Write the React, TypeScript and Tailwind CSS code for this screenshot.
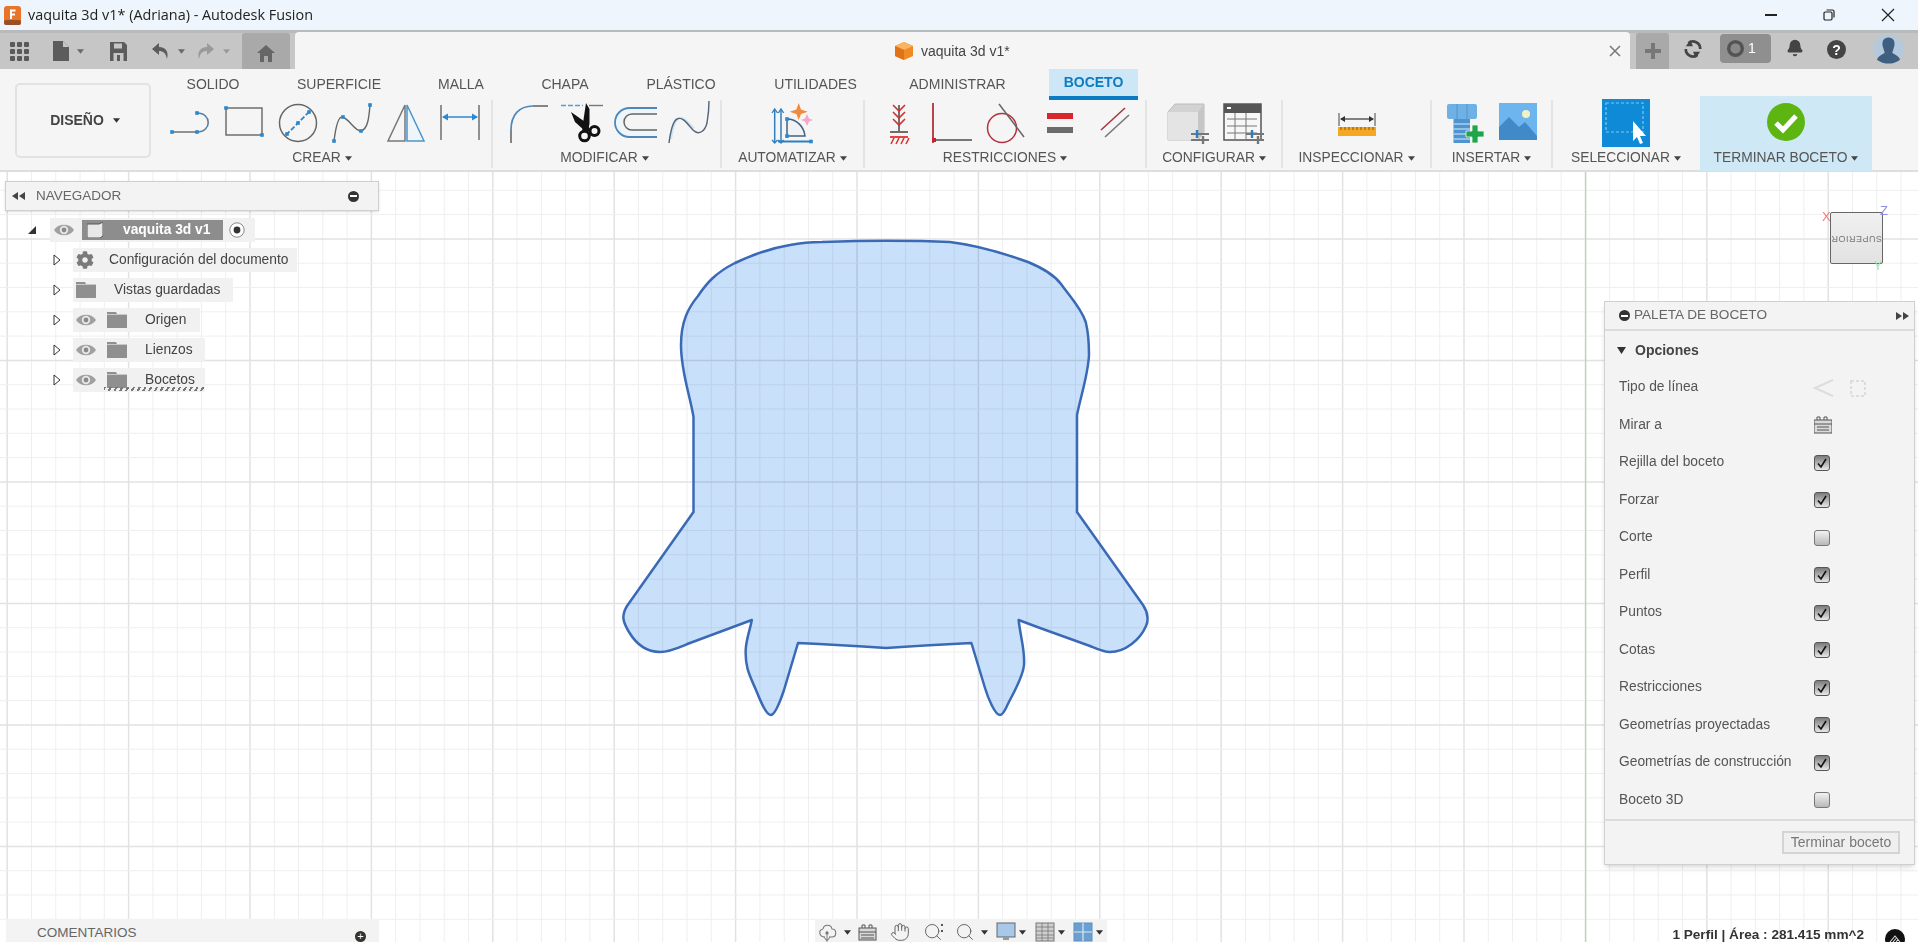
import { Hand, Search, Bell } from 'lucide-react';
import { FaCog } from 'react-icons/fa';
import type { ReactNode } from 'react';

const blob =
  'M693.5 512 L693.5 417 C690 395 681 372 681 345 C681 322 688 308 698 296 C706 284 715 273 735 263 C752 255 772 248 790 245 C805 242 815 242 822 242 C850 241 870 240.7 886 240.7 C905 240.7 930 241 950 242 C975 245 1000 252 1028 262 C1045 269 1055 276 1061 284 C1071 298 1081 308 1085.7 322 C1089 335 1089 345 1089 355 C1088 375 1081 395 1077 415 L1077 512 L1143 605 C1149 614 1148 622 1146 626 C1140 640 1125 652 1110 652 C1103 652 1095 648 1090 646 L1040 628 L1018.6 620 C1021 640 1025 650 1024 665 C1023 678 1012 695 1006 708 C1004 712 1002 715 1000 715 C995 715 988 698 985 688 L971.4 643 Q930 645 886 648 Q840 645 798 643 L784 690 C780 702 775 715 770.7 715 C766 715 760 700 756 690 C750 676 745 668 745.7 650 C746 640 750 630 751.8 620 L690 643 C680 647 670 652 660 652 C645 652 635 642 629 632 C623 622 621 616 627 606 Z';

const verticals = Array.from({ length: 79 }, (_, i) => 7.2 + i * 24.28);
const horizontals = Array.from({ length: 33 }, (_, i) => 166 + i * 24.3);

function Caret({ className = '' }: { className?: string }) {
  return (
    <svg viewBox="0 0 8 5" className={`inline-block w-[7px] h-[5px] shrink-0 ${className}`}>
      <path d="M0 0h8L4 5z" fill="currentColor" />
    </svg>
  );
}

function Box({ children, w = 40, h = 40 }: { children: ReactNode; w?: number; h?: number }) {
  return (
    <svg viewBox={`0 0 ${w} ${h}`} width={w} height={h} className="shrink-0 overflow-visible">
      {children}
    </svg>
  );
}

function Dot({ x, y }: { x: number; y: number }) {
  return <rect x={x - 1.8} y={y - 1.8} width={3.6} height={3.6} fill="#2b87cf" />;
}

function LineIcon() {
  return (
    <Box>
      <path d="M2 29H27" stroke="#666" strokeWidth="1.4" fill="none" />
      <path d="M27 29C42 29 42 10 27 10" stroke="#5b7f9f" strokeWidth="1.6" fill="none" />
      <Dot x={2} y={29} />
      <Dot x={27} y={29} />
      <Dot x={27} y={10} />
    </Box>
  );
}
function RectIcon() {
  return (
    <Box>
      <rect x="2" y="5" width="36" height="27" stroke="#666" strokeWidth="1.4" fill="none" />
      <Dot x={2} y={5} />
      <Dot x={38} y={32} />
    </Box>
  );
}
function CircleIcon() {
  return (
    <Box>
      <circle cx="20" cy="20" r="18.5" stroke="#666" strokeWidth="1.5" fill="none" />
      <path d="M8 32L32 8" stroke="#2b87cf" strokeWidth="1.8" strokeDasharray="5 2" />
      <Dot x={20} y={20} />
      <Dot x={9} y={31} />
      <Dot x={31} y={9} />
    </Box>
  );
}
function SplineIcon() {
  return (
    <Box>
      <path d="M2 38C4 22 7 14 10 14C17 15 22 28 29 28C36 26 37 14 38 2" stroke="#666" strokeWidth="1.4" fill="none" />
      <Dot x={2} y={38} />
      <Dot x={11} y={14} />
      <Dot x={29} y={28} />
      <Dot x={38} y={2} />
    </Box>
  );
}
function MirrorIcon() {
  return (
    <Box>
      <path d="M19 2L2 38H19Z" stroke="#777" strokeWidth="1.5" fill="none" />
      <path d="M21 2L38 38H21Z" stroke="#4e94c8" strokeWidth="1.5" fill="#eef6fb" />
    </Box>
  );
}
function DimIcon() {
  return (
    <Box>
      <path d="M1 2V37M39 2V37" stroke="#666" strokeWidth="1.4" />
      <path d="M3 14H37" stroke="#2b87cf" strokeWidth="1.6" />
      <path d="M2 14l6-3.5v7zM38 14l-6-3.5v7z" fill="#2b87cf" />
    </Box>
  );
}
function FilletIcon() {
  return (
    <Box>
      <path d="M2 40V27" stroke="#555" strokeWidth="1.4" fill="none" />
      <path d="M2 27C2 12 10 3 24 3" stroke="#4f87b8" strokeWidth="1.7" fill="none" />
      <path d="M24 3H39" stroke="#555" strokeWidth="1.4" />
    </Box>
  );
}
function ScissorsIcon() {
  return (
    <Box w={42}>
      <path d="M0 2.5H22" stroke="#5b9ad0" strokeWidth="1.4" strokeDasharray="5 2" />
      <path d="M28 2.5H42" stroke="#777" strokeWidth="1.4" />
      <path d="M25 0L28.5 6V21L26 30H21L22 20Z" fill="#111" />
      <path d="M10 9L27 21L29 28L24 28L14 19Z" fill="#111" />
      <circle cx="23.5" cy="33" r="4.8" stroke="#111" strokeWidth="3" fill="#f5f5f5" />
      <circle cx="33.5" cy="28" r="4.5" stroke="#111" strokeWidth="3" fill="#f5f5f5" />
    </Box>
  );
}
function OffsetIcon() {
  return (
    <Box w={42}>
      <path d="M42 5H14.5A14.5 14.5 0 0 0 14.5 34H42" stroke="#4f87b8" strokeWidth="1.8" fill="#eef6fb" />
      <path d="M42 11H17A8 8 0 0 0 17 27H42" stroke="#666" strokeWidth="1.5" fill="#f5f5f5" />
    </Box>
  );
}
function Spline2Icon() {
  return (
    <Box>
      <path d="M2 36C4 23 6 17 10 15C15 13 20 21 25 25" stroke="#cfe5f5" strokeWidth="2" fill="none" />
      <path d="M0 40C2 25 4 18 8 16C14 13 19 22 24 27C30 33 36 28 38 20C39 14 40 6 40 -2" stroke="#51657a" strokeWidth="1.4" fill="none" />
    </Box>
  );
}
function AutoIcon() {
  return (
    <Box>
      <path d="M1.7 7V40M8 7V40" stroke="#2f7fbe" strokeWidth="1.5" />
      <path d="M-1 10L1.7 6L4.5 10M5.3 10L8 6L10.7 10M-1 37L1.7 40L4.5 37M5.3 37L8 40L10.7 37" stroke="#2f7fbe" strokeWidth="1.3" fill="none" />
      <path d="M14 35V16C24 16 31 24 32 33H14" stroke="#44617d" strokeWidth="1.5" fill="#f0f3f6" />
      <path d="M5 38.5H38" stroke="#2f7fbe" strokeWidth="1.8" />
      <Dot x={14} y={16} />
      <Dot x={14} y={33} />
      <Dot x={38} y={38.5} />
      <path d="M34 11L36 15.5L40 17L36 18.5L34 23L32 18.5L28 17L32 15.5Z" fill="#f6a6c8" />
      <path d="M25.7 0L28 6.5L34.7 8.7L28 11L25.7 17L23.4 11L16.7 8.7L23.4 6.5Z" fill="#f28a3c" />
    </Box>
  );
}
function HorizIcon() {
  return (
    <Box w={20} h={44}>
      <path d="M10 2V28" stroke="#444" strokeWidth="1.5" />
      <path d="M4 2L10 8L16 2M4 9L10 15L16 9M4 16L10 22L16 16" stroke="#c33" strokeWidth="1.6" fill="none" />
      <path d="M1 29H19" stroke="#333" strokeWidth="1.4" />
      <path d="M1 34H19" stroke="#d33" strokeWidth="1.8" />
      <path d="M5 35L2 41M10 35L7 41M15 35L12 41M20 35L17 41" stroke="#d33" strokeWidth="1.6" />
    </Box>
  );
}
function PerpIcon() {
  return (
    <Box>
      <path d="M1 0V40" stroke="#b3323e" strokeWidth="1.8" />
      <path d="M1 37H40" stroke="#777" strokeWidth="1.8" />
      <rect x="0" y="35" width="4" height="4" fill="#c8222f" />
    </Box>
  );
}
function TangentIcon() {
  return (
    <Box>
      <circle cx="17" cy="25" r="14.5" stroke="#b3323e" strokeWidth="1.5" fill="none" />
      <path d="M14 1L39 34" stroke="#666" strokeWidth="1.5" />
    </Box>
  );
}
function EqualIcon() {
  return (
    <div className="flex flex-col w-[26px] h-10 gap-[8px] pt-[10px] shrink-0">
      <div className="h-[6px] bg-[#d9252b]" />
      <div className="h-[6px] bg-[#6b6b6b]" />
    </div>
  );
}
function ParallelIcon() {
  return (
    <Box w={30} h={40}>
      <path d="M2 27L26 5" stroke="#a53a42" strokeWidth="1.6" />
      <path d="M6 34L30 12" stroke="#777" strokeWidth="1.6" />
    </Box>
  );
}
function Sliders() {
  return (
    <g>
      <path d="M23 31H41" stroke="#777" strokeWidth="2" />
      <path d="M23 37H41" stroke="#777" strokeWidth="2" />
      <path d="M29 27V35" stroke="#2b7fc0" strokeWidth="2.4" />
      <path d="M35 33V41" stroke="#777" strokeWidth="2.4" />
    </g>
  );
}
function CubeIcon() {
  return (
    <Box>
      <path d="M0 9L7 1H36V29L30 37H0Z" fill="#d2d2d2" stroke="#bcbcbc" />
      <path d="M0 9H30V37H0Z" fill="#e4e4e4" />
      <path d="M30 9L36 1V29L30 37Z" fill="#c6c6c6" />
      <Sliders />
    </Box>
  );
}
function TableIcon() {
  return (
    <Box>
      <rect x="1" y="1" width="37" height="36" fill="#f7f7f7" stroke="#555" strokeWidth="1.5" />
      <rect x="1" y="1" width="37" height="9" fill="#555" />
      <rect x="4" y="4" width="4" height="2" fill="#fff" />
      <path d="M4 16H34M4 23H34M4 30H34M12 10V36M23 10V36" stroke="#777" strokeWidth="1" />
      <Sliders />
    </Box>
  );
}
function RulerIcon() {
  return (
    <Box w={38} h={24}>
      <path d="M1 1V14M37 1V14" stroke="#444" strokeWidth="1" />
      <path d="M3 7H35" stroke="#333" strokeWidth="1.2" />
      <path d="M2 7l5-3v6zM36 7l-5-3v6z" fill="#333" />
      <rect x="0" y="15" width="38" height="9" fill="#f5a623" />
      <path d="M3 15v3M7 15v3M11 15v3M15 15v3M19 15v3M23 15v3M27 15v3M31 15v3M35 15v3" stroke="#7a5a10" strokeWidth="1" />
    </Box>
  );
}
function BoltIcon() {
  return (
    <Box>
      <rect x="0" y="1" width="30" height="15" rx="2" fill="#6fb1e4" />
      <path d="M10 1V16M20 1V16" stroke="#4f94cf" strokeWidth="1" />
      <path d="M6.5 16H23V40H6.5Z" fill="#4f94cf" />
      <path d="M6.5 21H23M6.5 26H23M6.5 31H23M6.5 36H23" stroke="#a9cfee" strokeWidth="1.5" />
      <path d="M25 22H31V28H37V34H31V40H25V34H19V28H25Z" fill="#1fa54a" stroke="#f5f5f5" strokeWidth="0.8" />
    </Box>
  );
}
function ImageIcon() {
  return (
    <Box w={38} h={38}>
      <rect x="0" y="0" width="38" height="37" fill="#6db5ee" />
      <circle cx="27" cy="11" r="4" fill="#f3f0c4" />
      <path d="M0 37V24L10 14L20 24L26 19L38 33V37Z" fill="#3f8ac7" />
    </Box>
  );
}
function SelectIcon() {
  return (
    <Box w={48} h={48}>
      <rect width="48" height="48" fill="#0f8ad6" />
      <rect x="4" y="4" width="37" height="29" fill="none" stroke="#7cc8f2" strokeWidth="1.2" strokeDasharray="3 2" />
      <path d="M31 22L31 42L35 38L38 45L41 44L38 37L44 37Z" fill="#fff" />
    </Box>
  );
}
function CheckIcon() {
  return (
    <Box w={38} h={38}>
      <circle cx="19" cy="19" r="19" fill="#5cb510" />
      <path d="M9 20L16 27L29 13" stroke="#fff" strokeWidth="5" fill="none" />
    </Box>
  );
}

function Group({ w, label, children }: { w: number; label: string; children: ReactNode }) {
  return (
    <div style={{ width: w }} className="relative flex flex-col items-center shrink-0">
      <div className="h-[48px] flex items-start justify-center pt-[4px]">{children}</div>
      <div className="h-[16px] mt-[3px] flex items-center gap-[4px] text-[13.8px] leading-none text-[#555] whitespace-nowrap">
        {label}
        <Caret className="text-[#444]" />
      </div>
    </div>
  );
}

function Sep() {
  return <div className="w-[2px] h-[68px] mt-[1px] -mx-[1px] bg-[#e4e4e4] shrink-0" />;
}

const tabs: [string, string][] = [
  ['SOLIDO', 'w-[96px]'],
  ['SUPERFICIE', 'w-[156px]'],
  ['MALLA', 'w-[88px]'],
  ['CHAPA', 'w-[120px]'],
  ['PLÁSTICO', 'w-[112px]'],
  ['UTILIDADES', 'w-[157px]'],
  ['ADMINISTRAR', 'w-[127px]'],
];

function Ribbon() {
  return (
    <div className="h-[103px] bg-[#f5f5f5] border-b-2 border-[#dedede] flex shrink-0">
      <div className="w-[152px] pl-[15px] pt-[14px] shrink-0">
        <div className="w-[136px] h-[75px] rounded-[5px] border-2 border-[#e2e2e2] flex items-center justify-center gap-[9px] pl-[4px] text-[14px] font-bold text-[#444]">
          DISEÑO
          <Caret className="text-[#333]" />
        </div>
      </div>
      <div className="flex flex-col flex-1">
        <div className="h-[30px] flex items-center pl-[13px] text-[14px] text-[#555]">
          {tabs.map(([t, w]) => (
            <div key={t} className={`${w} text-center shrink-0`}>
              {t}
            </div>
          ))}
          <div className="ml-[28px] w-[89px] h-[31px] bg-[#cde7f6] border-b-4 border-[#0b7cc4] font-bold text-[#0b7cc4] flex items-center justify-center shrink-0">
            BOCETO
          </div>
        </div>
        <div className="flex">
          <Group w={340} label="CREAR">
            <div className="flex gap-[14px] pl-[6px]">
              <LineIcon />
              <RectIcon />
              <CircleIcon />
              <SplineIcon />
              <MirrorIcon />
              <DimIcon />
            </div>
          </Group>
          <Sep />
          <div className="-ml-[2px]">
            <Group w={229} label="MODIFICAR">
              <div className="flex gap-[12px] pl-[8px]">
                <FilletIcon />
                <ScissorsIcon />
                <OffsetIcon />
                <Spline2Icon />
              </div>
            </Group>
          </div>
          <div className="ml-[2px]">
            <Sep />
          </div>
          <Group w={143} label="AUTOMATIZAR">
            <AutoIcon />
          </Group>
          <Sep />
          <Group w={282} label="RESTRICCIONES">
            <div className="flex items-start pl-[8px]">
              <HorizIcon />
              <div className="ml-[23px]">
                <PerpIcon />
              </div>
              <div className="ml-[13px]">
                <TangentIcon />
              </div>
              <div className="ml-[22px]">
                <EqualIcon />
              </div>
              <div className="ml-[26px]">
                <ParallelIcon />
              </div>
            </div>
          </Group>
          <Sep />
          <Group w={136} label="CONFIGURAR">
            <div className="flex gap-[15px] pl-[3px]">
              <CubeIcon />
              <TableIcon />
            </div>
          </Group>
          <Sep />
          <Group w={149} label="INSPECCIONAR">
            <div className="pt-[9px]">
              <RulerIcon />
            </div>
          </Group>
          <Sep />
          <Group w={121} label="INSERTAR">
            <div className="flex gap-[12px]">
              <BoltIcon />
              <ImageIcon />
            </div>
          </Group>
          <Sep />
          <Group w={148} label="SELECCIONAR">
            <div className="-mt-[4px]">
              <SelectIcon />
            </div>
          </Group>
          <div className="w-[172px] h-[75px] -mt-[3px] pt-[3px] bg-[#cfe8f6] shrink-0">
            <Group w={172} label="TERMINAR BOCETO">
              <CheckIcon />
            </Group>
          </div>
        </div>
      </div>
    </div>
  );
}

function TitleBar() {
  return (
    <div className="h-[30px] bg-[#eff5fc] flex items-center pl-[4px] shrink-0">
      <svg viewBox="0 0 17 19" className="w-[17px] h-[19px] shrink-0">
        <rect width="17" height="19" rx="3" fill="#e8742a" />
        <rect y="14" width="17" height="5" rx="2" fill="#9a4f25" />
        <path d="M6 3.5H11.5V5.5H8V7.5H11V9.5H8V13H6Z" fill="#fff" />
      </svg>
      <span className="ml-[7px] text-[14.4px] text-[#222] font-['Open_Sans',sans-serif] whitespace-nowrap">
        vaquita 3d v1* (Adriana) - Autodesk Fusion
      </span>
      <div className="ml-auto flex items-center">
        <div className="w-[58px] flex justify-center">
          <div className="w-[12px] h-[1.5px] bg-[#222]" />
        </div>
        <div className="w-[58px] flex justify-center">
          <svg viewBox="0 0 12 12" className="w-[12px] h-[12px]">
            <rect x="1" y="3" width="8" height="8" rx="1.2" fill="none" stroke="#222" strokeWidth="1.2" />
            <path d="M3.5 1H9.5A1.5 1.5 0 0 1 11 2.5V8.5" fill="none" stroke="#222" strokeWidth="1.2" />
          </svg>
        </div>
        <div className="w-[60px] pr-[1px] flex justify-center">
          <svg viewBox="0 0 14 14" className="w-[14px] h-[14px]">
            <path d="M1 1L13 13M13 1L1 13" stroke="#222" strokeWidth="1.2" />
          </svg>
        </div>
      </div>
    </div>
  );
}

function TopStrip() {
  return (
    <div className="h-[39px] flex bg-[#c6c6c6] border-t-[3px] border-[#b8bbbe] shrink-0">
      <div className="w-[242px] flex items-center shrink-0">
        <div className="ml-[10px] w-[19px] h-[19px] grid grid-cols-3 gap-[2px]">
          {Array.from({ length: 9 }, (_, i) => (
            <div key={i} className="bg-[#5a5a5a] rounded-[1px]" />
          ))}
        </div>
        <svg viewBox="0 0 16 20" className="ml-[24px] w-[16px] h-[20px]">
          <path d="M0 0H10L16 6V20H0Z" fill="#5c5c5c" />
          <path d="M10 0V6H16" fill="#c6c6c6" />
        </svg>
        <Caret className="ml-[8px] text-[#6a6a6a]" />
        <svg viewBox="0 0 17 19" className="ml-[26px] w-[17px] h-[19px]">
          <path d="M0 0H14L17 3V19H0Z" fill="#5c5c5c" />
          <rect x="4" y="1.5" width="8" height="5" fill="#c6c6c6" />
          <rect x="3.5" y="11" width="10" height="8" fill="#c6c6c6" />
          <rect x="7" y="13" width="3" height="6" fill="#5c5c5c" />
        </svg>
        <svg viewBox="0 0 17 16" className="ml-[25px] w-[17px] h-[16px]">
          <path d="M7 0L0 6L7 12V8C11 8 14 10 15 16C17 9 14 4 7 4Z" fill="#5c5c5c" />
        </svg>
        <Caret className="ml-[9px] text-[#6a6a6a]" />
        <svg viewBox="0 0 17 16" className="ml-[12px] w-[17px] h-[16px]">
          <path d="M10 0L17 6L10 12V8C6 8 3 10 2 16C0 9 3 4 10 4Z" fill="#9a9a9a" />
        </svg>
        <Caret className="ml-[9px] text-[#9a9a9a]" />
      </div>
      <div className="w-[48px] bg-[#a9a9a9] rounded-t-[3px] flex items-center justify-center shrink-0">
        <svg viewBox="0 0 18 17" className="w-[18px] h-[17px] mt-[4px]">
          <path d="M9 0L18 8H15V17H11V11H7V17H3V8H0Z" fill="#666" />
        </svg>
      </div>
      <div className="w-[1335px] ml-[5px] -mt-[1px] bg-[#f5f5f5] rounded-t-[4px] flex items-center shrink-0">
        <div className="ml-[600px] flex items-center">
          <svg viewBox="0 0 18 18" className="w-[18px] h-[18px]">
            <path d="M9 0L18 4V14L9 18L0 14V4Z" fill="#f08a24" />
            <path d="M9 8L18 4L9 0L0 4Z" fill="#f9b45f" />
            <path d="M9 8V18L0 14V4Z" fill="#e0731a" />
          </svg>
          <span className="ml-[8px] mt-[1px] text-[14px] text-[#444] whitespace-nowrap">vaquita 3d v1*</span>
        </div>
        <svg viewBox="0 0 12 12" className="ml-auto mr-[9px] w-[12px] h-[12px]">
          <path d="M1 1L11 11M11 1L1 11" stroke="#777" strokeWidth="1.5" />
        </svg>
      </div>
      <div className="w-[33px] ml-[6px] bg-[#a9a9a9] rounded-t-[3px] flex items-center justify-center shrink-0">
        <svg viewBox="0 0 16 16" className="w-[16px] h-[16px]">
          <path d="M6 0H10V6H16V10H10V16H6V10H0V6H6Z" fill="#777" />
        </svg>
      </div>
      <div className="flex-1 flex items-start pt-[1px]">
        <svg viewBox="0 0 20 20" className="ml-[15px] mt-[6px] w-[18px] h-[18px]">
          <path d="M5 3.5A8 8 0 0 1 18 10" fill="none" stroke="#444" strokeWidth="3" />
          <path d="M15 16.5A8 8 0 0 1 2 10" fill="none" stroke="#444" strokeWidth="3" />
          <path d="M7 0L2 7L10 7Z" fill="#444" />
          <path d="M13 20L18 13L10 13Z" fill="#444" />
        </svg>
        <div className="ml-[18px] w-[51px] h-[29px] bg-[#8f8f8f] rounded-[4px] flex items-center">
          <svg viewBox="0 0 20 20" className="ml-[6px] w-[19px] h-[19px]">
            <circle cx="10" cy="10" r="9" fill="#555" />
            <circle cx="10" cy="10" r="6" fill="#888" stroke="#444" />
          </svg>
          <span className="ml-[3px] text-[14px] text-white">1</span>
        </div>
        <Bell size={18} fill="#444" stroke="#444" className="ml-[15px] mt-[5px]" />
        <div className="ml-[23px] mt-[6px] w-[19px] h-[19px] rounded-full bg-[#444] text-white text-[14px] font-bold flex items-center justify-center leading-none">
          ?
        </div>
        <svg viewBox="0 0 32 30" className="ml-[27px] w-[31px] h-[30px]">
          <ellipse cx="16" cy="15" rx="16" ry="15" fill="#b5c9dc" />
          <path d="M16 3C21 3 23 7 22 12C21 16 20 18 20 19C24 21 27 23 28 26C24 29 20 30 16 30C12 30 8 29 4 26C5 23 8 21 12 19C12 18 11 16 10 12C9 7 11 3 16 3Z" fill="#3f5f80" />
        </svg>
      </div>
    </div>
  );
}

function EyeShape({ className = '' }: { className?: string }) {
  return (
    <svg viewBox="0 0 20 12" className={`w-[20px] h-[12px] shrink-0 ${className}`}>
      <path d="M0 6C4 -1 16 -1 20 6C16 13 4 13 0 6Z" fill="#a0a0a0" />
      <circle cx="10" cy="6" r="4.2" fill="#e8e8e8" />
      <circle cx="10" cy="6" r="2.4" fill="#8a8a8a" />
    </svg>
  );
}

function FolderShape({ className = '' }: { className?: string }) {
  return (
    <svg viewBox="0 0 20 16" className={`w-[20px] h-[16px] shrink-0 ${className}`}>
      <path d="M0 0H9L10 2H20V16H0Z" fill="#8f8f8f" />
      <path d="M0 2.5H20" stroke="#d8d8d8" strokeWidth="0.8" />
    </svg>
  );
}

function NavRow({ w, children }: { w: number; children: ReactNode }) {
  return (
    <div className="flex items-center h-[24px]">
      <svg viewBox="0 0 8 12" className="ml-[48px] w-[8px] h-[12px] shrink-0">
        <path d="M1 1L7 6L1 11Z" fill="#fff" stroke="#333" strokeWidth="1" />
      </svg>
      <div style={{ width: w }} className="ml-[12px] h-[24px] bg-[#f1f1f1] flex items-center text-[13.8px] text-[#444] whitespace-nowrap pl-[3px]">
        {children}
      </div>
    </div>
  );
}

function Nav() {
  return (
    <div className="absolute left-[5px] top-[9px] w-[374px]">
      <div className="h-[30px] bg-[#f3f3f3] border border-[#cfcfcf] shadow-sm flex items-center px-[6px]">
        <svg viewBox="0 0 13 8" className="w-[13px] h-[8px]">
          <path d="M6 0V8L0 4ZM13 0V8L7 4Z" fill="#444" />
        </svg>
        <span className="ml-[11px] text-[13.5px] text-[#666]">NAVEGADOR</span>
        <div className="ml-auto mr-[13px] w-[11px] h-[11px] rounded-full bg-[#333] flex items-center justify-center">
          <div className="w-[7px] h-[2px] bg-white" />
        </div>
      </div>
      <div className="flex flex-col gap-[6px] pt-[7px]">
        <div className="flex items-center h-[24px]">
          <svg viewBox="0 0 8 8" className="ml-[23px] w-[8px] h-[8px]">
            <path d="M8 0V8H0Z" fill="#333" />
          </svg>
          <div className="ml-[14px] w-[205px] h-[24px] bg-[#f1f1f1] flex items-center">
            <EyeShape className="ml-[4px]" />
            <div className="ml-[8px] w-[141px] h-[20px] bg-[#8d8d8d] flex items-center">
              <svg viewBox="0 0 16 16" className="ml-[5px] w-[16px] h-[16px]">
                <path d="M0 2H12L16 0V14L13 16H0Z" fill="#e8e8e8" stroke="#555" />
              </svg>
              <span className="ml-[20px] text-[13.8px] font-bold text-white whitespace-nowrap">vaquita 3d v1</span>
            </div>
            <svg viewBox="0 0 16 16" className="ml-[6px] w-[16px] h-[16px]">
              <circle cx="8" cy="8" r="7.2" fill="#fff" stroke="#888" />
              <circle cx="8" cy="8" r="3.4" fill="#333" />
            </svg>
          </div>
        </div>
        <NavRow w={224}>
          <FaCog size={18} color="#7a7a7a" />
          <span className="ml-[15px]">Configuración del documento</span>
        </NavRow>
        <NavRow w={160}>
          <FolderShape />
          <span className="ml-[18px]">Vistas guardadas</span>
        </NavRow>
        <NavRow w={127}>
          <EyeShape />
          <FolderShape className="ml-[11px]" />
          <span className="ml-[18px]">Origen</span>
        </NavRow>
        <NavRow w={132}>
          <EyeShape />
          <FolderShape className="ml-[11px]" />
          <span className="ml-[18px]">Lienzos</span>
        </NavRow>
        <div className="relative">
          <NavRow w={132}>
            <EyeShape />
            <FolderShape className="ml-[11px]" />
            <span className="ml-[18px]">Bocetos</span>
          </NavRow>
          <div className="absolute left-[99px] top-[19px] w-[101px] h-[4px] bg-[repeating-linear-gradient(120deg,#777_0px,#777_2px,transparent_2px,transparent_5px)]" />
        </div>
      </div>
    </div>
  );
}

function Check({ on }: { on: boolean }) {
  return (
    <div
      className={`w-[16px] h-[16px] rounded-[3px] border flex items-center justify-center ${
        on ? 'bg-gradient-to-b from-[#7c7c7c] to-[#e8e8e8] border-[#555]' : 'bg-gradient-to-b from-[#f2f2f2] to-[#b8b8b8] border-[#777]'
      }`}
    >
      {on && (
        <svg viewBox="0 0 12 12" className="w-[12px] h-[12px]">
          <path d="M2 6.5L5 10L10 2" fill="none" stroke="#111" strokeWidth="1.6" />
        </svg>
      )}
    </div>
  );
}

const options: [string, boolean][] = [
  ['Rejilla del boceto', true],
  ['Forzar', true],
  ['Corte', false],
  ['Perfil', true],
  ['Puntos', true],
  ['Cotas', true],
  ['Restricciones', true],
  ['Geometrías proyectadas', true],
  ['Geometrías de construcción', true],
  ['Boceto 3D', false],
];

function PaletteRow({ label, children }: { label: string; children: ReactNode }) {
  return (
    <div className="h-[37.5px] flex items-center pl-[14px] text-[13.8px] text-[#555]">
      <div className="w-[195px] whitespace-nowrap">{label}</div>
      {children}
    </div>
  );
}

function Palette() {
  return (
    <div className="absolute left-[1604px] top-[129px] w-[311px] h-[564px] bg-[#f3f3f3] border border-[#d0d0d0] shadow-md flex flex-col">
      <div className="h-[29px] border-b-2 border-[#dcdcdc] flex items-center pl-[14px] shrink-0">
        <div className="w-[11px] h-[11px] rounded-full bg-[#333] flex items-center justify-center">
          <div className="w-[7px] h-[2px] bg-white" />
        </div>
        <span className="ml-[4px] text-[13.6px] text-[#666]">PALETA DE BOCETO</span>
        <svg viewBox="0 0 13 8" className="ml-auto mr-[5px] w-[13px] h-[8px]">
          <path d="M0 0V8L6 4ZM7 0V8L13 4Z" fill="#444" />
        </svg>
      </div>
      <div className="h-[39px] flex items-center pl-[12px] text-[14px] font-bold text-[#444] shrink-0">
        <svg viewBox="0 0 9 7" className="w-[9px] h-[7px]">
          <path d="M0 0H9L4.5 7Z" fill="#333" />
        </svg>
        <span className="ml-[9px]">Opciones</span>
      </div>
      <div className="-mt-[1px]">
        <PaletteRow label="Tipo de línea">
          <svg viewBox="0 0 60 20" className="w-[60px] h-[20px] -ml-[1px]">
            <path d="M20 2L2 10L20 18" fill="none" stroke="#ddd" strokeWidth="2" />
            <path d="M38 3H52V18H38Z" fill="none" stroke="#ddd" strokeWidth="2" strokeDasharray="3 2" />
          </svg>
        </PaletteRow>
        <PaletteRow label="Mirar a">
          <svg viewBox="0 0 18 18" className="w-[18px] h-[18px]">
            <rect x="0" y="4" width="18" height="13" fill="#dadada" stroke="#555" />
            <path d="M0 8H18M3 11H15M3 14H15" stroke="#555" />
            <path d="M3 4V1H6V4M10 4V1H13V4" fill="none" stroke="#555" />
          </svg>
        </PaletteRow>
        {options.map(([label, on]) => (
          <PaletteRow key={label} label={label}>
            <Check on={on} />
          </PaletteRow>
        ))}
      </div>
      <div className="mt-auto h-[45px] border-t-2 border-[#dcdcdc] flex items-center justify-end pr-[14px]">
        <div className="w-[118px] h-[23px] border-2 border-[#d4d4d4] bg-[#efefef] flex items-center justify-center text-[14px] text-[#777]">
          Terminar boceto
        </div>
      </div>
    </div>
  );
}

function ViewCube() {
  return (
    <div className="absolute left-[1822px] top-[35px] w-[64px] h-[65px]">
      <div className="absolute left-[8px] top-[5px] w-[53px] h-[52px] rounded-[2px] border border-[#666] bg-gradient-to-b from-[#f0f0f0] to-[#e2e2e2] flex items-center justify-center">
        <span className="rotate-180 text-[9px] tracking-[0.5px] text-[#777]">SUPERIOR</span>
      </div>
      <span className="absolute left-0 top-[3px] text-[13px] leading-none text-[#f27a7a]">X</span>
      <span className="absolute left-[58px] -top-[3px] text-[13px] leading-none text-[#8d8fe6]">Z</span>
      <span className="absolute left-[52px] top-[53px] text-[12px] leading-none text-[#8fe6ae]">Y</span>
    </div>
  );
}

function BottomTools() {
  return (
    <div className="absolute left-[815px] bottom-0 w-[292px] h-[23px] pt-[3px] bg-[#f3f3f3] flex items-center text-[#666]">
      <svg viewBox="0 0 21 20" className="ml-[2px] w-[21px] h-[20px] shrink-0">
        <path d="M6 7C7 2 14 2 15 7C20 7 20 15 15 15L12 15M8 15C2 15 1 8 6 7" fill="none" stroke="#777" strokeWidth="1.1" />
        <path d="M10 9V19M7 15L10 19L13 15" fill="none" stroke="#888" strokeWidth="1.1" />
        <circle cx="10" cy="11" r="1.6" fill="#777" />
      </svg>
      <Caret className="ml-[6px] text-[#333]" />
      <svg viewBox="0 0 19 18" className="ml-[7px] w-[19px] h-[18px] shrink-0">
        <rect x="1" y="5" width="17" height="12" fill="#d8d8d8" stroke="#555" />
        <path d="M1 9H18M3 12H16M3 15H16" stroke="#555" />
        <path d="M4 5V2H7V5M11 5V2H14V5" fill="none" stroke="#555" />
      </svg>
      <Hand size={20} strokeWidth={1.2} className="ml-[13px] shrink-0" />
      <div className="relative ml-[13px] w-[20px] h-[20px] shrink-0">
        <Search size={20} strokeWidth={1.2} />
        <div className="absolute right-0 top-[2px] w-[2px] h-[2px] bg-[#555]" />
        <div className="absolute right-0 top-[8px] w-[2px] h-[2px] bg-[#555]" />
      </div>
      <Search size={20} strokeWidth={1.2} className="ml-[12px] shrink-0" />
      <Caret className="ml-[6px] text-[#333]" />
      <svg viewBox="0 0 20 20" className="ml-[8px] w-[20px] h-[20px] shrink-0">
        <rect x="1" y="1" width="18" height="14" fill="#a7c8e8" stroke="#666" />
        <path d="M7 15H13V18H7Z" fill="#999" />
      </svg>
      <Caret className="ml-[3px] text-[#333]" />
      <svg viewBox="0 0 20 20" className="ml-[9px] w-[20px] h-[20px] shrink-0">
        <rect x="1" y="1" width="18" height="18" fill="#cfcfcf" stroke="#777" />
        <path d="M1 5H19M1 9H19M1 13H19M1 16H19M7 1V19M13 1V19" stroke="#777" strokeWidth="0.8" />
      </svg>
      <Caret className="ml-[3px] text-[#333]" />
      <svg viewBox="0 0 20 20" className="ml-[8px] w-[20px] h-[20px] shrink-0">
        <rect x="1" y="1" width="18" height="18" fill="#6a9fd0" stroke="#5b8fc4" />
        <path d="M10 1V19M1 10H19" stroke="#dce9f5" strokeWidth="1.2" />
      </svg>
      <Caret className="ml-[3px] text-[#333]" />
    </div>
  );
}

function CanvasDrawing() {
  return (
    <svg viewBox="0 172 1918 770" className="absolute inset-0 w-full h-full">
      {verticals.map((x, i) => (
        <line key={x} x1={x} x2={x} y1={172} y2={942} stroke={i % 5 === 0 ? '#e2e2e2' : '#efefef'} strokeWidth={i % 5 === 0 ? 1.5 : 1} />
      ))}
      {horizontals.map((y, i) => (
        <line key={y} x1={0} x2={1918} y1={y} y2={y} stroke={(i + 2) % 5 === 0 ? '#e2e2e2' : '#efefef'} strokeWidth={(i + 2) % 5 === 0 ? 1.5 : 1} />
      ))}
      <line x1={1585.7} x2={1585.7} y1={172} y2={942} stroke="#a5e598" strokeWidth={1.2} />
      <path d={blob} fill="#c9e0fb" className="mix-blend-multiply" />
      <path d={blob} fill="none" stroke="#3a69b6" strokeWidth={2.5} strokeLinejoin="round" />
    </svg>
  );
}

export default function App() {
  return (
    <div className="w-[1918px] h-[942px] flex flex-col overflow-hidden bg-white font-['Liberation_Sans',Arial,sans-serif]">
      <TitleBar />
      <TopStrip />
      <Ribbon />
      <div className="relative flex-1">
        <CanvasDrawing />
        <Nav />
        <ViewCube />
        <Palette />
        <div className="absolute left-[6px] bottom-0 w-[373px] h-[23px] bg-[#f3f3f3] flex items-center pl-[31px] text-[13.5px] text-[#666]">
          <span className="mt-[6px]">COMENTARIOS</span>
          <div className="ml-auto mr-[13px] mt-[11px] w-[11px] h-[11px] rounded-full bg-[#333] flex items-center justify-center text-white text-[11px] leading-none">
            +
          </div>
        </div>
        <BottomTools />
        <div className="absolute right-[54px] bottom-0 text-[13.6px] font-bold text-[#333] leading-none whitespace-nowrap">
          1 Perfil | Área : 281.415 mm^2
        </div>
        <div className="absolute right-[13px] bottom-[-7px] w-[20px] h-[20px] rounded-full bg-[#111] flex items-center justify-center">
          <svg viewBox="0 0 12 12" className="w-[12px] h-[12px]">
            <path d="M1 9L6 3L11 9M4 9L7 5.5M7 9L9 6.5" fill="none" stroke="#ddd" strokeWidth="1.1" />
          </svg>
        </div>
      </div>
    </div>
  );
}
